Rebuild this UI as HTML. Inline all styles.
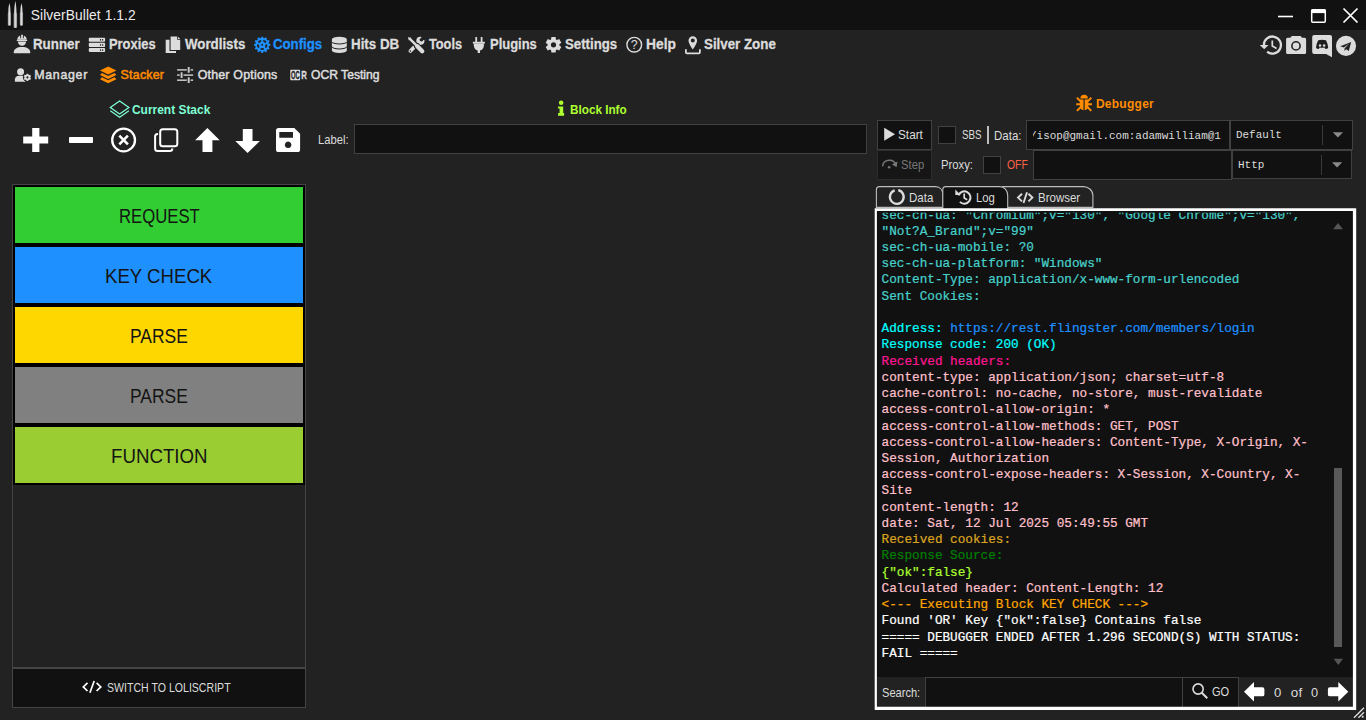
<!DOCTYPE html>
<html lang="en">
<head>
<meta charset="utf-8">
<title>SilverBullet 1.1.2</title>
<style>
html,body{margin:0;padding:0;}
body{width:1366px;height:720px;overflow:hidden;background:#222222;position:relative;font-family:"Liberation Sans",sans-serif;color:#dcdcdc;}
.a{position:absolute;}
.b{position:absolute;box-sizing:border-box;}
.t{position:absolute;white-space:nowrap;line-height:1;}
svg{position:absolute;overflow:visible;}
.blk{position:absolute;box-sizing:border-box;left:13px;width:292px;height:60px;border:2px solid #000;}
.inp{position:absolute;box-sizing:border-box;background:#111111;border:1px solid #414141;}
#log{position:absolute;left:882px;top:206px;width:440px;font-family:"Liberation Mono",monospace;font-size:12.7px;line-height:16.246px;color:#dcdcdc;}
#log div{height:16.246px;white-space:pre;-webkit-text-stroke:0.22px currentColor;}
</style>
</head>
<body>
<!-- title bar -->
<div class="a" style="left:0;top:0;width:1366px;height:30px;background:#111111;"></div>
<!-- label input -->
<div class="inp" style="left:354px;top:124px;width:513px;height:30px;"></div>
<!-- stack list -->
<div class="b" style="left:12px;top:184px;width:294px;height:484px;border:1px solid #444444;"></div>
<div class="blk" style="top:185px;background:#32cd32;"></div>
<div class="blk" style="top:245px;background:#1e90ff;"></div>
<div class="blk" style="top:305px;background:#ffd700;"></div>
<div class="blk" style="top:365px;background:#808080;"></div>
<div class="blk" style="top:425px;background:#9acd32;"></div>
<div class="b" style="left:12px;top:668px;width:294px;height:40px;background:#111111;border:1px solid #444444;"></div>
<!-- debugger controls -->
<div class="inp" style="left:877px;top:120px;width:55px;height:30px;"></div>
<div class="inp" style="left:877px;top:150px;width:55px;height:30px;background:#161616;border-color:#2c2c2c;"></div>
<div class="inp" style="left:938px;top:126px;width:18px;height:18px;"></div>
<div class="a" style="left:987px;top:126px;width:2px;height:18px;background:#bdbdbd;"></div>
<div class="inp" style="left:1026px;top:120px;width:204px;height:30px;"></div>
<div class="inp" style="left:1230px;top:120px;width:123px;height:30px;"></div>
<div class="a" style="left:1322px;top:125px;width:1px;height:20px;background:#3a3a3a;"></div>
<div class="inp" style="left:983px;top:156px;width:18px;height:18px;"></div>
<div class="inp" style="left:1033px;top:150px;width:199px;height:30px;"></div>
<div class="inp" style="left:1232px;top:150px;width:120px;height:29px;"></div>
<div class="a" style="left:1321px;top:155px;width:1px;height:20px;background:#3a3a3a;"></div>
<!-- log box -->
<div class="b" style="left:875px;top:209px;width:481px;height:501px;background:#111111;"></div>
<div class="a" style="left:877px;top:677px;width:477px;height:31px;background:#222222;"></div>
<div class="inp" style="left:925px;top:677px;width:258px;height:31px;"></div>
<div class="inp" style="left:1182px;top:677px;width:57px;height:31px;"></div>
<!-- scrollbar -->
<div class="a" style="left:1334px;top:468px;width:8px;height:179px;background:#595959;"></div>
<svg width="1366" height="720" viewBox="0 0 1366 720" style="left:0;top:0;">
<defs>
<linearGradient id="sil" x1="0" x2="1" y1="0" y2="0"><stop offset="0" stop-color="#8a8a8a"/><stop offset="0.45" stop-color="#e4e4e4"/><stop offset="1" stop-color="#8a8a8a"/></linearGradient>
</defs>
<!-- logo bullets -->
<g fill="url(#sil)">
<path d="M9.4,2.9 C8.98,5.1 8.20,7.300000000000001 8.20,11.3 L8.20,12.0 L7.80,13.0 L7.80,25.3 Q9.4,26.2 11.00,25.3 L11.00,13.0 L10.60,12.0 L10.60,11.3 C10.60,7.300000000000001 9.82,5.1 9.4,2.9Z"/>
<path d="M15.35,0.9 C14.89,3.1 14.05,8.0 14.05,12.0 L14.05,12.7 L13.60,13.7 L13.60,27.5 Q15.35,28.4 17.10,27.5 L17.10,13.7 L16.65,12.7 L16.65,12.0 C16.65,8.0 15.80,3.1 15.35,0.9Z"/>
<path d="M21.45,2.9 C21.03,5.1 20.25,7.300000000000001 20.25,11.3 L20.25,12.0 L19.85,13.0 L19.85,25.3 Q21.45,26.2 23.05,25.3 L23.05,13.0 L22.65,12.0 L22.65,11.3 C22.65,7.300000000000001 21.87,5.1 21.45,2.9Z"/>
</g>
<!-- window controls -->
<g stroke="#ffffff" fill="none">
<path d="M1278,16.5 H1293" stroke-width="1.6"/>
<rect x="1311.7" y="9.7" width="13.6" height="12.6" rx="1" stroke-width="1.5"/>
<rect x="1311.5" y="9.5" width="14" height="3.6" fill="#ffffff" stroke="none"/>
<path d="M1343.5,8.5 L1357.5,22.5 M1357.5,8.5 L1343.5,22.5" stroke-width="1.7"/>
</g>
<!-- tabs -->
<path d="M876.4,207.4 L876.4,189.6 Q876.4,186.6 879.4,186.6 L935.5,186.6 C940.0,186.6 943,190.1 943,195.6 L943,207.4Z" fill="#222222" stroke="#bdbdbd" stroke-width="1.1"/>
<path d="M1000.5,207.4 L1000.5,189.6 Q1000.5,186.6 1003.5,186.6 L1083.5,186.6 C1088.0,186.6 1092.9,190.1 1092.9,195.6 L1092.9,207.4Z" fill="#222222" stroke="#bdbdbd" stroke-width="1.1"/>
<path d="M942.8,209 L942.8,189.6 Q942.8,186.6 945.8,186.6 L999.7,186.6 C1004.2,186.6 1007.7,190.1 1007.7,195.6 L1007.7,209" fill="#111111" stroke="#bdbdbd" stroke-width="1.1"/>
<!-- main menu icons -->
<g fill="#dcdcdc">
<path d="M17.3,39.8 C17.3,37.6 18.5,36 20.2,35.4 L20.2,38.2 L21.1,38.2 L21.1,34.7 L22.9,34.7 L22.9,38.2 L23.8,38.2 L23.8,35.4 C25.5,36 26.7,37.6 26.7,39.8Z"/>
<rect x="16.7" y="39.7" width="10.6" height="1.3" rx="0.4"/>
<path d="M17.9,41.6 L26.1,41.6 C26.1,44.1 24.3,45.8 22,45.8 C19.7,45.8 17.9,44.1 17.9,41.6Z"/>
<path d="M13.8,53.3 L13.8,52.2 C13.8,49 17,47 22,47 C27,47 30.2,49 30.2,52.2 L30.2,53.3Z"/>
<rect x="88.8" y="37.7" width="16.3" height="4.1" rx="1"/>
<rect x="99.95" y="39.10" width="1.15" height="1.45" fill="#1c1c1c"/><rect x="102.05" y="39.10" width="1.15" height="1.45" fill="#1c1c1c"/>
<rect x="88.8" y="42.85" width="16.3" height="4.1" rx="1"/>
<rect x="99.95" y="44.25" width="1.15" height="1.45" fill="#1c1c1c"/><rect x="102.05" y="44.25" width="1.15" height="1.45" fill="#1c1c1c"/>
<rect x="88.8" y="48.0" width="16.3" height="4.1" rx="1"/>
<rect x="99.95" y="49.40" width="1.15" height="1.45" fill="#1c1c1c"/><rect x="102.05" y="49.40" width="1.15" height="1.45" fill="#1c1c1c"/>
<path d="M165.7,39.7 L169.5,39.7 L169.5,51 L176,51 L176,53.1 L165.7,53.1Z" />
<path d="M170.6,36.6 L177.2,36.6 L177.2,39.7 L180.2,39.7 L180.2,50 L170.6,50Z M178,36.7 L180.2,39 L178,39Z"/>
</g>
<g fill="#1e90ff" fill-rule="evenodd">
<path d="M261.08,37.99 L261.34,36.64 L263.06,36.64 L263.32,37.99 L264.64,38.35 L265.54,37.31 L267.02,38.17 L266.57,39.46 L267.54,40.43 L268.83,39.98 L269.69,41.46 L268.65,42.36 L269.01,43.68 L270.36,43.94 L270.36,45.66 L269.01,45.92 L268.65,47.24 L269.69,48.14 L268.83,49.62 L267.54,49.17 L266.57,50.14 L267.02,51.43 L265.54,52.29 L264.64,51.25 L263.32,51.61 L263.06,52.96 L261.34,52.96 L261.08,51.61 L259.76,51.25 L258.86,52.29 L257.38,51.43 L257.83,50.14 L256.86,49.17 L255.57,49.62 L254.71,48.14 L255.75,47.24 L255.39,45.92 L254.04,45.66 L254.04,43.94 L255.39,43.68 L255.75,42.36 L254.71,41.46 L255.57,39.98 L256.86,40.43 L257.83,39.46 L257.38,38.17 L258.86,37.31 L259.76,38.35Z M264.05,49.00 A1.85,1.05 180.0 1,0 260.35,49.00 A1.85,1.05 180.0 1,0 264.05,49.00ZM266.77,44.34 A1.85,1.05 108.0 1,0 265.62,47.86 A1.85,1.05 108.0 1,0 266.77,44.34ZM263.17,40.31 A1.85,1.05 36.0 1,0 266.17,42.49 A1.85,1.05 36.0 1,0 263.17,40.31ZM258.23,42.49 A1.85,1.05 -36.0 1,0 261.23,40.31 A1.85,1.05 -36.0 1,0 258.23,42.49ZM258.78,47.86 A1.85,1.05 252.0 1,0 257.63,44.34 A1.85,1.05 252.0 1,0 258.78,47.86ZM261.25,44.80 a0.95,0.95 0 1,0 1.9,0 a0.95,0.95 0 1,0 -1.9,0Z"/>
</g>
<g fill="#dcdcdc">
<path d="M331.9,39.4 A7.45,2.6 0 0 1 346.8,39.4 L346.8,41.2 A7.45,2.3 0 0 1 331.9,41.2Z"/>
<path d="M331.9,42.2 A7.45,2.3 0 0 0 346.8,42.2 L346.8,46.1 A7.45,2.3 0 0 1 331.9,46.1Z"/>
<path d="M331.9,47.1 A7.45,2.3 0 0 0 346.8,47.1 L346.8,50.6 A7.45,2.4 0 0 1 331.9,50.6Z"/>
</g>
<path d="M410.4,51 L418.2,43.2" stroke="#dcdcdc" stroke-width="3.8" stroke-linecap="round" fill="none"/>
<circle cx="420.4" cy="40.8" r="4.1" fill="#dcdcdc"/>
<path d="M420.6,40.6 L421.9,34.8 L426.6,39.6Z" fill="#222"/>
<circle cx="421.4" cy="39.8" r="1.8" fill="#222"/>
<circle cx="410.3" cy="51.1" r="0.8" fill="#222"/>
<path d="M408.6,37.6 L416,45" stroke="#222" stroke-width="4.6" stroke-linecap="butt" fill="none"/>
<path d="M417.2,46.2 L422.3,51.3" stroke="#222" stroke-width="6.4" stroke-linecap="round" fill="none"/>
<path d="M409.4,38.4 L416.4,45.4" stroke="#dcdcdc" stroke-width="2.4" stroke-linecap="butt" fill="none"/>
<path d="M407.9,36.9 L411.4,37.9 L408.9,40.4Z" fill="#dcdcdc"/>
<path d="M417.3,46.3 L422.2,51.2" stroke="#dcdcdc" stroke-width="4.4" stroke-linecap="round" fill="none"/>
<g fill="#dcdcdc">
<rect x="475.3" y="37" width="1.8" height="5" rx="0.6"/><rect x="480.7" y="37" width="1.8" height="5" rx="0.6"/>
<rect x="472.8" y="41.7" width="12.1" height="2" rx="0.6"/>
<path d="M473.8,43.7 L483.9,43.7 L483.9,45.4 C483.9,48 482.2,50 480,50.5 L480,53.1 L477.7,53.1 L477.7,50.5 C475.5,50 473.8,48 473.8,45.4Z"/>
</g>
<path fill="#dcdcdc" fill-rule="evenodd" d="M551.10,39.41 L551.40,36.98 L555.60,36.98 L555.90,39.41 L556.97,40.03 L559.23,39.07 L561.32,42.70 L559.37,44.18 L559.37,45.42 L561.32,46.90 L559.23,50.53 L556.97,49.57 L555.90,50.19 L555.60,52.62 L551.40,52.62 L551.10,50.19 L550.03,49.57 L547.77,50.53 L545.68,46.90 L547.63,45.42 L547.63,44.18 L545.68,42.70 L547.77,39.07 L550.03,40.03Z M550.90,44.80 a2.6,2.6 0 1,0 5.2,0 a2.6,2.6 0 1,0 -5.2,0Z"/>
<circle cx="634.25" cy="44.7" r="7.35" fill="none" stroke="#dcdcdc" stroke-width="1.4"/>
<text x="634.3" y="49.3" font-family="Liberation Sans,sans-serif" font-size="12.5" fill="#dcdcdc" text-anchor="middle">?</text>
<path fill="#dcdcdc" fill-rule="evenodd" d="M692.8,36.2 a4.3,4.3 0 0 1 4.3,4.3 c0,3 -4.3,9 -4.3,9 c0,0 -4.3,-6 -4.3,-9 a4.3,4.3 0 0 1 4.3,-4.3z M690.80,40.40 a2.0,2.0 0 1,0 4.0,0 a2.0,2.0 0 1,0 -4.0,0Z"/>
<path d="M685.9,49.2 L685.9,52.3 Q685.9,53.3 686.9,53.3 L698.9,53.3 Q699.9,53.3 699.9,52.3 L699.9,49.2" fill="none" stroke="#dcdcdc" stroke-width="1.8"/>
<!-- right menu icons -->
<path d="M1263.90,45.05 A8.5,8.5 0 1 1 1267.17,51.75" fill="none" stroke="#dcdcdc" stroke-width="2.3"/>
<path d="M1259.7,45.0 L1268.5,45.0 L1264.2,49.2Z" fill="#dcdcdc"/>
<path d="M1272.3,40.6 L1272.3,45.9 L1276.6,48.4" fill="none" stroke="#dcdcdc" stroke-width="1.7"/>
<path fill="#dcdcdc" fill-rule="evenodd" d="M1287.6,37.7 L1290.4,37.7 L1291.8,35.9 L1300.6,35.9 L1302,37.7 L1304.6,37.7 Q1306.1,37.7 1306.1,39.2 L1306.1,52.4 Q1306.1,53.9 1304.6,53.9 L1287.6,53.9 Q1286.1,53.9 1286.1,52.4 L1286.1,39.2 Q1286.1,37.7 1287.6,37.7Z M1291.10,45.90 a4.9,4.9 0 1,0 9.8,0 a4.9,4.9 0 1,0 -9.8,0Z"/>
<circle cx="1296" cy="45.9" r="3.3" fill="#dcdcdc"/>
<path fill="#dcdcdc" d="M1314.2,34.9 L1330,34.9 Q1332,34.9 1332,36.9 L1332,57.2 L1326,53.9 L1314.2,53.9 Q1312.2,53.9 1312.2,51.9 L1312.2,36.9 Q1312.2,34.9 1314.2,34.9Z"/>
<path fill="#1e1e1e" d="M1318.2,40.2 Q1322.1,39.3 1326,40.2 Q1327.9,43.6 1328.2,48 Q1327,48.9 1325.4,48.9 L1324.6,47.6 Q1322.1,48.1 1319.6,47.6 L1318.8,48.9 Q1317.2,48.9 1316,48 Q1316.3,43.6 1318.2,40.2Z"/>
<circle cx="1320" cy="45.4" r="1.25" fill="#dcdcdc"/><circle cx="1324.1" cy="45.4" r="1.25" fill="#dcdcdc"/>
<circle cx="1346" cy="45.9" r="10.05" fill="#dcdcdc"/>
<path fill="#262626" d="M1351.2,41.9 L1340.2,46.3 L1343.8,47.5 L1349.2,43.6 L1344.6,48.2 L1344.4,50.9 L1346.1,49.2 L1348.8,51Z"/>
<!-- submenu icons -->
<circle cx="20.6" cy="71.85" r="3.5" fill="#dcdcdc"/>
<path fill="#dcdcdc" d="M14.9,81.7 L14.9,79.6 C14.9,77.1 16.8,75.8 19,75.8 L22.3,75.8 C24.2,75.8 25.6,76.8 25.6,78.4 L25.6,81.7Z"/>
<circle cx="27.4" cy="77.4" r="4.5" fill="#222222"/>
<path fill="#dcdcdc" fill-rule="evenodd" d="M26.29,74.72 L26.57,73.69 L28.23,73.69 L28.51,74.72 L29.17,75.10 L30.20,74.83 L31.03,76.26 L30.28,77.02 L30.28,77.78 L31.03,78.54 L30.20,79.97 L29.17,79.70 L28.51,80.08 L28.23,81.11 L26.57,81.11 L26.29,80.08 L25.63,79.70 L24.60,79.97 L23.77,78.54 L24.52,77.78 L24.52,77.02 L23.77,76.26 L24.60,74.83 L25.63,75.10Z M26.35,77.40 a1.05,1.05 0 1,0 2.1,0 a1.05,1.05 0 1,0 -2.1,0Z"/>
<path fill="#ff8c00" d="M108.2,66.6 L116.4,70.6 L108.2,74.6 L100,70.6Z"/>
<path fill="#ff8c00" d="M102,73 L108.2,76 L114.4,73 L116.4,74.9 L108.2,78.9 L100,74.9Z"/>
<path fill="#ff8c00" d="M102,77.3 L108.2,80.3 L114.4,77.3 L116.4,79.2 L108.2,83.2 L100,79.2Z"/>
<g fill="#c8c8c8">
<rect x="177.1" y="69.15" width="16" height="1.5"/>
<rect x="186.79999999999998" y="67.9" width="3.8" height="4" fill="#222222"/>
<rect x="187.7" y="67.0" width="2" height="5.8" rx="0.6"/>
<rect x="177.1" y="74.35" width="16" height="1.5"/>
<rect x="179.7" y="73.1" width="3.8" height="4" fill="#222222"/>
<rect x="180.6" y="72.19999999999999" width="2" height="5.8" rx="0.6"/>
<rect x="177.1" y="79.45" width="16" height="1.5"/>
<rect x="186.79999999999998" y="78.2" width="3.8" height="4" fill="#222222"/>
<rect x="187.7" y="77.3" width="2" height="5.8" rx="0.6"/>
</g>
<rect x="290.3" y="69.8" width="9.8" height="10.4" rx="0.8" fill="#dedede"/>
<text x="291" y="78.8" font-family="Liberation Sans,sans-serif" font-size="10.4" font-weight="bold" fill="#1c1c1c" stroke="#1c1c1c" stroke-width="0.3" textLength="8.6" lengthAdjust="spacingAndGlyphs">OC</text>
<text x="301.2" y="79" font-family="Liberation Sans,sans-serif" font-size="10.4" font-weight="bold" fill="#dcdcdc" stroke="#dcdcdc" stroke-width="0.3" textLength="5.6" lengthAdjust="spacingAndGlyphs">R</text>
<path d="M119.6,100.9 L128.9,107.4 L119.6,113.9 L110.3,107.4Z" fill="none" stroke="#7fffd4" stroke-width="1.25" stroke-linejoin="miter"/>
<path d="M110.3,110.7 L119.6,117.2 L128.9,110.7" fill="none" stroke="#7fffd4" stroke-width="1.25"/>
<circle cx="561.15" cy="102.85" r="2.25" fill="#adff2f"/>
<path fill="#adff2f" d="M558.1,106.4 L563.2,106.4 L563.2,113 L564.1,113 L564.1,115.8 L558.1,115.8 L558.1,113 L559.6,113 L559.6,108.6 L558.1,108.6Z"/>
<path fill="#ff8c00" d="M1080.4,98.5 A3.75,3.75 0 0 1 1087.9,98.5Z"/>
<path fill="#ff8c00" d="M1079.9,99.5 L1083.5,99.5 L1083.5,110.2 C1081.3,110 1079.9,108.2 1079.9,106Z M1084.7,99.5 L1088.4,99.5 L1088.4,106 C1088.4,108.2 1087,110 1084.7,110.2Z"/>
<g stroke="#ff8c00" stroke-width="2" stroke-linecap="butt" fill="none"><path d="M1076.9,97.6 L1080.6,101.4 M1076.2,104.3 L1080.2,104.3 M1076.9,110.9 L1080.6,107.2 M1091.3,97.6 L1087.7,101.4 M1092,104.3 L1088,104.3 M1091.3,110.9 L1087.7,107.2"/></g>
<!-- toolbar icons -->
<path fill="#ffffff" d="M32.2,128.1 L39.4,128.1 L39.4,136.6 L48.2,136.6 L48.2,143.6 L39.4,143.6 L39.4,152 L32.2,152 L32.2,143.6 L23.2,143.6 L23.2,136.6 L32.2,136.6Z"/>
<rect x="69" y="136.9" width="24" height="6.2" rx="0.8" fill="#ffffff"/>
<circle cx="123.6" cy="140" r="11.4" fill="none" stroke="#ffffff" stroke-width="2.3"/>
<path d="M119.3,135.7 L127.9,144.3 M127.9,135.7 L119.3,144.3" stroke="#ffffff" stroke-width="2.6" fill="none"/>
<rect x="155.1" y="133.9" width="17.2" height="17" rx="2.5" fill="none" stroke="#ffffff" stroke-width="2"/>
<rect x="158.1" y="127.2" width="21" height="21.2" rx="3.5" fill="#222222"/>
<rect x="160.2" y="129.2" width="17.1" height="17.1" rx="2.5" fill="none" stroke="#ffffff" stroke-width="2"/>
<path fill="#ffffff" d="M207.4,127.9 L219.7,140.3 L212.4,140.3 L212.4,152 L202.5,152 L202.5,140.3 L195.1,140.3Z"/>
<path fill="#ffffff" d="M247.6,153 L259.9,140.9 L252.5,140.9 L252.5,129 L242.8,129 L242.8,140.9 L235.3,140.9Z"/>
<path fill="#ffffff" fill-rule="evenodd" d="M278.6,127.9 L294.3,127.9 L300.1,133.7 L300.1,149.4 Q300.1,152 297.5,152 L278.6,152 Q276,152 276,149.4 L276,130.5 Q276,127.9 278.6,127.9Z M279.3,131.9 L279.3,137.8 L293,137.8 L293,131.9Z M288.1,141.5 a3.3,3.3 0 1 0 0.01,0Z"/>
<path fill="#dcdcdc" d="M884.2,127.7 L895,134.2 L884.2,140.7Z"/>
<path d="M882.55,166.36 A6.9,6.9 0 0 1 895.88,164.84" fill="none" stroke="#777777" stroke-width="1.5"/>
<path fill="#777777" d="M897.5,161.6 L896.6,167.2 L892,164.6Z"/>
<circle cx="889.1" cy="167.3" r="1.3" fill="#777777"/>
<path fill="#8a8a8a" d="M1332.8,132.3 L1343,132.3 L1337.9,137.5Z"/>
<path fill="#8a8a8a" d="M1332,162.2 L1342.2,162.2 L1337.1,167.4Z"/>
<path d="M898.23,190.15 A6.9,6.9 0 1 1 894.67,190.34" fill="none" stroke="#dcdcdc" stroke-width="2.3"/>
<path d="M958.47,195.38 A6.2,6.2 0 1 1 959.92,201.88" fill="none" stroke="#dcdcdc" stroke-width="2"/>
<path fill="#dcdcdc" d="M955.3,189.6 L960.6,194.9 L955.3,194.9Z"/>
<path d="M964.2,193.4 L964.2,197.9 L967.2,199.7" fill="none" stroke="#dcdcdc" stroke-width="1.7"/>
<path d="M1022,193.8 L1018,197.6 L1022,201.4 M1028.4,193.8 L1032.4,197.6 L1028.4,201.4 M1027,192.2 L1023.5,203" fill="none" stroke="#dcdcdc" stroke-width="1.9"/>
<path d="M87.5,682.8 L83.3,686.9 L87.5,691 M96.6,682.8 L100.8,686.9 L96.6,691 M94.2,681 L89.9,692.8" fill="none" stroke="#ffffff" stroke-width="1.7"/>
<path fill="#555555" d="M1338,223 L1342.9,229.2 L1333.1,229.2Z"/>
<path fill="#555555" d="M1333.6,658.7 L1343,658.7 L1338.3,665Z"/>
<circle cx="1198.1" cy="689" r="5.1" fill="none" stroke="#dcdcdc" stroke-width="1.6"/>
<path d="M1201.8,692.7 L1207.3,698.2" stroke="#dcdcdc" stroke-width="2" fill="none"/>
<path fill="#ffffff" d="M1244,691.8 L1254,682 L1254,687.3 L1262.5,687.3 Q1264.4,687.3 1264.4,689.2 L1264.4,694.4 Q1264.4,696.3 1262.5,696.3 L1254,696.3 L1254,701.6Z"/>
<path fill="#ffffff" d="M1348.3,691.8 L1338.3,682 L1338.3,687.3 L1329.8,687.3 Q1327.9,687.3 1327.9,689.2 L1327.9,694.4 Q1327.9,696.3 1329.8,696.3 L1338.3,696.3 L1338.3,701.6Z"/>
<path d="M1354,717.8 L1364,707.8 M1358.4,717.8 L1364,712.2" stroke="#e0e0e0" stroke-width="1.3" fill="none"/><rect x="1361.8" y="715.8" width="1.8" height="1.8" fill="#e0e0e0"/>
<path fill="#ffffff" fill-rule="evenodd" d="M874.7,208.3 L1356.2,208.3 L1356.2,710 L874.7,710Z M876.9,211.1 L876.9,706.8 L1352.9,706.8 L1352.9,211.1Z"/>

</svg>
<span class="t" style="left:30.80px;top:8.72px;font-size:13.8px;font-weight:normal;color:#ececec;letter-spacing:0.081px;">SilverBullet 1.1.2</span>
<span class="t" style="left:33.40px;top:37.72px;font-size:13.8px;font-weight:bold;color:#dcdcdc;letter-spacing:0.000px;transform:scaleX(0.9649);transform-origin:0 0;-webkit-text-stroke:0.3px currentColor;">Runner</span>
<span class="t" style="left:109.20px;top:37.72px;font-size:13.8px;font-weight:bold;color:#dcdcdc;letter-spacing:0.000px;transform:scaleX(0.9346);transform-origin:0 0;-webkit-text-stroke:0.3px currentColor;">Proxies</span>
<span class="t" style="left:184.50px;top:37.72px;font-size:13.8px;font-weight:bold;color:#dcdcdc;letter-spacing:0.000px;transform:scaleX(0.9631);transform-origin:0 0;-webkit-text-stroke:0.3px currentColor;">Wordlists</span>
<span class="t" style="left:272.90px;top:37.72px;font-size:13.8px;font-weight:bold;color:#1e90ff;letter-spacing:0.000px;transform:scaleX(0.9580);transform-origin:0 0;-webkit-text-stroke:0.3px currentColor;">Configs</span>
<span class="t" style="left:350.50px;top:37.72px;font-size:13.8px;font-weight:bold;color:#dcdcdc;letter-spacing:0.000px;transform:scaleX(0.9673);transform-origin:0 0;-webkit-text-stroke:0.3px currentColor;">Hits DB</span>
<span class="t" style="left:428.70px;top:37.72px;font-size:13.8px;font-weight:bold;color:#dcdcdc;letter-spacing:0.000px;transform:scaleX(0.9227);transform-origin:0 0;-webkit-text-stroke:0.3px currentColor;">Tools</span>
<span class="t" style="left:489.60px;top:37.72px;font-size:13.8px;font-weight:bold;color:#dcdcdc;letter-spacing:0.000px;transform:scaleX(0.9392);transform-origin:0 0;-webkit-text-stroke:0.3px currentColor;">Plugins</span>
<span class="t" style="left:564.80px;top:37.72px;font-size:13.8px;font-weight:bold;color:#dcdcdc;letter-spacing:0.000px;transform:scaleX(0.9589);transform-origin:0 0;-webkit-text-stroke:0.3px currentColor;">Settings</span>
<span class="t" style="left:645.60px;top:37.72px;font-size:13.8px;font-weight:bold;color:#dcdcdc;letter-spacing:0.000px;transform:scaleX(0.9998);transform-origin:0 0;-webkit-text-stroke:0.3px currentColor;">Help</span>
<span class="t" style="left:703.90px;top:37.72px;font-size:13.8px;font-weight:bold;color:#dcdcdc;letter-spacing:0.000px;transform:scaleX(0.9654);transform-origin:0 0;-webkit-text-stroke:0.3px currentColor;">Silver Zone</span>
<span class="t" style="left:34.30px;top:68.50px;font-size:12.4px;font-weight:normal;color:#dcdcdc;letter-spacing:0.682px;-webkit-text-stroke:0.5px currentColor;">Manager</span>
<span class="t" style="left:120.60px;top:68.50px;font-size:12.4px;font-weight:normal;color:#ff8c00;letter-spacing:0.231px;-webkit-text-stroke:0.5px currentColor;">Stacker</span>
<span class="t" style="left:197.70px;top:68.50px;font-size:12.4px;font-weight:normal;color:#dcdcdc;letter-spacing:0.205px;-webkit-text-stroke:0.5px currentColor;">Other Options</span>
<span class="t" style="left:311.00px;top:68.50px;font-size:12.4px;font-weight:normal;color:#dcdcdc;letter-spacing:0.000px;transform:scaleX(0.9784);transform-origin:0 0;-webkit-text-stroke:0.5px currentColor;">OCR Testing</span>
<span class="t" style="left:132.00px;top:103.54px;font-size:12px;font-weight:bold;color:#7fffd4;letter-spacing:0.000px;transform:scaleX(0.9949);transform-origin:0 0;">Current Stack</span>
<span class="t" style="left:569.60px;top:103.64px;font-size:12px;font-weight:bold;color:#adff2f;letter-spacing:0.000px;transform:scaleX(0.9773);transform-origin:0 0;">Block Info</span>
<span class="t" style="left:1095.90px;top:97.74px;font-size:12px;font-weight:bold;color:#ff8c00;letter-spacing:0.269px;">Debugger</span>
<span class="t" style="left:318.30px;top:132.96px;font-size:13.4px;font-weight:normal;color:#dcdcdc;letter-spacing:0.000px;transform:scaleX(0.8360);transform-origin:0 0;">Label:</span>
<span class="t" style="left:118.90px;top:205.62px;font-size:20.3px;font-weight:normal;color:#141414;letter-spacing:0.000px;transform:scaleX(0.8241);transform-origin:0 0;">REQUEST</span>
<span class="t" style="left:105.30px;top:265.62px;font-size:20.3px;font-weight:normal;color:#141414;letter-spacing:0.000px;transform:scaleX(0.9182);transform-origin:0 0;">KEY CHECK</span>
<span class="t" style="left:130.40px;top:325.62px;font-size:20.3px;font-weight:normal;color:#141414;letter-spacing:0.000px;transform:scaleX(0.8593);transform-origin:0 0;">PARSE</span>
<span class="t" style="left:130.40px;top:385.62px;font-size:20.3px;font-weight:normal;color:#141414;letter-spacing:0.000px;transform:scaleX(0.8593);transform-origin:0 0;">PARSE</span>
<span class="t" style="left:110.70px;top:445.62px;font-size:20.3px;font-weight:normal;color:#141414;letter-spacing:0.000px;transform:scaleX(0.9219);transform-origin:0 0;">FUNCTION</span>
<span class="t" style="left:106.90px;top:681.90px;font-size:12.4px;font-weight:normal;color:#dcdcdc;letter-spacing:0.000px;transform:scaleX(0.8535);transform-origin:0 0;">SWITCH TO LOLISCRIPT</span>
<span class="t" style="left:897.80px;top:127.86px;font-size:13.4px;font-weight:normal;color:#dcdcdc;letter-spacing:0.000px;transform:scaleX(0.8804);transform-origin:0 0;">Start</span>
<span class="t" style="left:900.90px;top:157.76px;font-size:13.4px;font-weight:normal;color:#777777;letter-spacing:0.000px;transform:scaleX(0.8422);transform-origin:0 0;">Step</span>
<span class="t" style="left:962.00px;top:127.86px;font-size:13.4px;font-weight:normal;color:#dcdcdc;letter-spacing:0.000px;transform:scaleX(0.7314);transform-origin:0 0;">SBS</span>
<span class="t" style="left:994.00px;top:128.66px;font-size:13.4px;font-weight:normal;color:#dcdcdc;letter-spacing:0.000px;transform:scaleX(0.8590);transform-origin:0 0;">Data:</span>
<span class="t" style="left:941.40px;top:157.56px;font-size:13.4px;font-weight:normal;color:#dcdcdc;letter-spacing:0.000px;transform:scaleX(0.8431);transform-origin:0 0;">Proxy:</span>
<span class="t" style="left:1007.00px;top:157.66px;font-size:13.4px;font-weight:normal;color:#ff6347;letter-spacing:0.000px;transform:scaleX(0.7767);transform-origin:0 0;">OFF</span>
<span class="t" style="left:909.00px;top:191.06px;font-size:13.4px;font-weight:normal;color:#dcdcdc;letter-spacing:0.000px;transform:scaleX(0.8588);transform-origin:0 0;">Data</span>
<span class="t" style="left:976.10px;top:191.06px;font-size:13.4px;font-weight:normal;color:#dcdcdc;letter-spacing:0.000px;transform:scaleX(0.8459);transform-origin:0 0;">Log</span>
<span class="t" style="left:1037.80px;top:191.06px;font-size:13.4px;font-weight:normal;color:#dcdcdc;letter-spacing:0.000px;transform:scaleX(0.8590);transform-origin:0 0;">Browser</span>
<span class="t" style="left:881.60px;top:686.70px;font-size:12.4px;font-weight:normal;color:#dcdcdc;letter-spacing:0.000px;transform:scaleX(0.8945);transform-origin:0 0;">Search:</span>
<span class="t" style="left:1212.10px;top:685.06px;font-size:13.4px;font-weight:normal;color:#dcdcdc;letter-spacing:0.000px;transform:scaleX(0.8252);transform-origin:0 0;">GO</span>
<span class="t" style="left:1273.90px;top:686.06px;font-size:13.4px;font-weight:normal;color:#dcdcdc;letter-spacing:0.000px;transform:scaleX(0.9795);transform-origin:0 0;">0</span>
<span class="t" style="left:1290.80px;top:686.06px;font-size:13.4px;font-weight:normal;color:#dcdcdc;letter-spacing:0.228px;">of</span>
<span class="t" style="left:1311.20px;top:686.06px;font-size:13.4px;font-weight:normal;color:#dcdcdc;letter-spacing:0.000px;transform:scaleX(0.9526);transform-origin:0 0;">0</span>
<span class="t" style="left:1236.30px;top:130.14px;font-size:11.7px;font-weight:normal;color:#dcdcdc;letter-spacing:0.000px;font-family:'Liberation Mono',monospace;transform:scaleX(0.9346);transform-origin:0 0;">Default</span>
<span class="t" style="left:1238.00px;top:160.14px;font-size:11.7px;font-weight:normal;color:#dcdcdc;letter-spacing:0.000px;font-family:'Liberation Mono',monospace;transform:scaleX(0.9408);transform-origin:0 0;">Http</span>
<div class="a" style="left:1033px;top:121px;width:196px;height:28px;overflow:hidden;"><span class="t" style="left:-3.0px;top:9.6px;font-family:'Liberation Mono',monospace;font-size:11.7px;color:#dcdcdc;transform:scaleX(0.9385);transform-origin:0 0;">/isop@gmail.com:adamwilliam@1</span></div>
<div class="a" style="left:877px;top:212px;width:452px;height:465px;overflow:hidden;clip-path:inset(0.8px 0 0 0);">
<div id="log" style="left:4.6px;top:-4.5px;">
<div style="color:#48d1cc">sec-ch-ua: "Chromium";v="130", "Google Chrome";v="130",</div>
<div style="color:#48d1cc">"Not?A_Brand";v="99"</div>
<div style="color:#48d1cc">sec-ch-ua-mobile: ?0</div>
<div style="color:#48d1cc">sec-ch-ua-platform: "Windows"</div>
<div style="color:#48d1cc">Content-Type: application/x-www-form-urlencoded</div>
<div style="color:#48d1cc">Sent Cookies:</div>
<div> </div>
<div style="color:#00ffff">Address: <span style="color:#1e90ff">https://rest.flingster.com/members/login</span></div>
<div style="color:#00ffff">Response code: 200 (OK)</div>
<div style="color:#ff1493">Received headers:</div>
<div style="color:#ffc0cb">content-type: application/json; charset=utf-8</div>
<div style="color:#ffc0cb">cache-control: no-cache, no-store, must-revalidate</div>
<div style="color:#ffc0cb">access-control-allow-origin: *</div>
<div style="color:#ffc0cb">access-control-allow-methods: GET, POST</div>
<div style="color:#ffc0cb">access-control-allow-headers: Content-Type, X-Origin, X-</div>
<div style="color:#ffc0cb">Session, Authorization</div>
<div style="color:#ffc0cb">access-control-expose-headers: X-Session, X-Country, X-</div>
<div style="color:#ffc0cb">Site</div>
<div style="color:#ffc0cb">content-length: 12</div>
<div style="color:#ffc0cb">date: Sat, 12 Jul 2025 05:49:55 GMT</div>
<div style="color:#daa520">Received cookies:</div>
<div style="color:#008000">Response Source:</div>
<div style="color:#adff2f">{"ok":false}</div>
<div style="color:#ffc0cb">Calculated header: Content-Length: 12</div>
<div style="color:#ffa500">&lt;--- Executing Block KEY CHECK ---&gt;</div>
<div style="color:#ffffff">Found 'OR' Key {"ok":false} Contains false</div>
<div style="color:#ffffff">===== DEBUGGER ENDED AFTER 1.296 SECOND(S) WITH STATUS:</div>
<div style="color:#ffffff">FAIL =====</div>
</div>
</div>
</body>
</html>
